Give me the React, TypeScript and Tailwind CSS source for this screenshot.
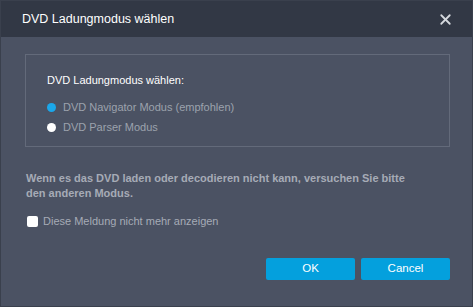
import { X } from "lucide-react";

export default function App() {
  return (
    <div className="w-[473px] h-[307px] bg-[#4b5263] border border-[#3a404d] flex flex-col overflow-hidden" style={{ fontFamily: '"Liberation Sans", Arial, sans-serif' }}>
      {/* Title bar */}
      <div className="h-[36px] bg-[#323845] flex items-center justify-between pl-[21px] pr-[18px] shrink-0">
        <span className="text-[12.5px] text-white">DVD Ladungmodus wählen</span>
        <X size={17} strokeWidth={2.5} className="text-[#d6d9de]" />
      </div>

      <div className="flex-1 flex flex-col pl-[24px] pr-[22px] pt-[17px]">
        {/* Mode box */}
        <div className="border border-[#636a7a] h-[93px] pl-[21px] pt-[18px]">
          <p className="text-[11px] text-white leading-[15px]">DVD Ladungmodus wählen:</p>
          <div className="mt-[12px] flex flex-col gap-[5px]">
            <label className="flex items-center gap-[7px] text-[11px] text-[#9ca2ad] leading-[15px]">
              <span className="w-[9px] h-[9px] rounded-full bg-[#1ba7ea]" />
              DVD Navigator Modus (empfohlen)
            </label>
            <label className="flex items-center gap-[7px] text-[11px] text-[#9ca2ad] leading-[15px]">
              <span className="w-[9px] h-[9px] rounded-full bg-white" />
              DVD Parser Modus
            </label>
          </div>
        </div>

        {/* Hint */}
        <p className="mt-[24px] pl-[1px] pr-[34px] text-[11px] font-bold text-[#a6abb6] leading-[15px]">
          Wenn es das DVD laden oder decodieren nicht kann, versuchen Sie bitte den anderen Modus.
        </p>

        <label className="mt-[13px] pl-[2px] flex items-center gap-[5px] text-[11px] text-[#a6abb6] leading-[15px]">
          <span className="w-[11px] h-[11px] rounded-[2px] bg-white" />
          Diese Meldung nicht mehr anzeigen
        </label>

        {/* Buttons */}
        <div className="mt-[29px] flex justify-end gap-[6px]">
          <button className="w-[89px] h-[22px] rounded-[2px] bg-[#04a0dd] text-white text-[11.5px]">OK</button>
          <button className="w-[89px] h-[22px] rounded-[2px] bg-[#04a0dd] text-white text-[11.5px]">Cancel</button>
        </div>
      </div>
    </div>
  );
}
